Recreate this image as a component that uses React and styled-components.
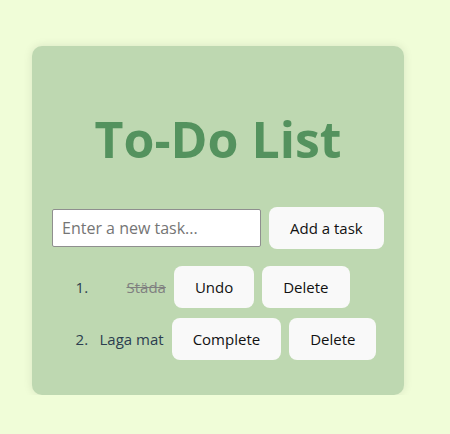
import React, { useState } from 'react';
import styled, { createGlobalStyle } from 'styled-components';

const GlobalStyle = createGlobalStyle`
  body {
    margin: 0;
    background: #f0fdd8;
    font-family: "Open Sans", "Noto Sans", sans-serif;
  }
`;

function App() {
  const [tasks, setTasks] = useState([
    { text: 'Städa', done: true },
    { text: 'Laga mat', done: false },
  ]);
  const [draft, setDraft] = useState('');

  const addTask = () => {
    if (!draft.trim()) return;
    setTasks([...tasks, { text: draft, done: false }]);
    setDraft('');
  };

  const toggle = (i) =>
    setTasks(tasks.map((t, j) => (j === i ? { ...t, done: !t.done } : t)));

  const remove = (i) => setTasks(tasks.filter((_, j) => j !== i));

  return (
    <>
      <GlobalStyle />
      <Page>
        <Card>
          <Title>To-Do List</Title>
          <InputRow>
            <TaskInput
              type="text"
              placeholder="Enter a new task..."
              value={draft}
              onChange={(e) => setDraft(e.target.value)}
            />
            <Button onClick={addTask}>Add a task</Button>
          </InputRow>
          <TaskList>
            {tasks.map((task, i) => (
              <TaskItem key={i}>
                <TaskText $done={task.done}>{task.text}</TaskText>
                <Button $inline onClick={() => toggle(i)}>
                  {task.done ? 'Undo' : 'Complete'}
                </Button>
                <Button $inline onClick={() => remove(i)}>Delete</Button>
              </TaskItem>
            ))}
          </TaskList>
        </Card>
      </Page>
    </>
  );
}

export default App;

const Page = styled.div`
  padding: 46px 0 0 32px;
`;

const Card = styled.div`
  box-sizing: border-box;
  width: 372px;
  height: 349px;
  padding: 20px;
  background: #bed8b1;
  border-radius: 10px;
  box-shadow: 0 0 10px rgba(0, 0, 0, 0.1);
`;

const Title = styled.h1`
  margin: 41px 0 0;
  font-size: 50px;
  line-height: 64px;
  font-weight: 700;
  color: #54925e;
  text-align: center;
`;

const InputRow = styled.div`
  display: flex;
  align-items: center;
  gap: 8px;
  margin-top: 36px;
`;

const TaskInput = styled.input`
  box-sizing: border-box;
  width: 209px;
  height: 38px;
  padding: 0 9px;
  border: 1px solid #8f8f8f;
  border-radius: 2px;
  font-family: inherit;
  font-size: 16px;
  color: #222;

  &::placeholder {
    color: #757575;
  }
`;

const Button = styled.button`
  box-sizing: border-box;
  height: 42px;
  padding: 0 21px;
  margin-left: ${(p) => (p.$inline ? '8px' : '0')};
  border: none;
  border-radius: 8px;
  background: #f9f9f9;
  font-family: inherit;
  font-size: 15px;
  color: #111;
  cursor: pointer;
`;

const TaskList = styled.ol`
  margin: 17px 0 0;
  padding-left: 40px;
  color: #2c3e50;
  font-size: 15px;
`;

const TaskItem = styled.li`
  text-align: center;
  margin-bottom: 10px;
  line-height: 42px;
`;

const TaskText = styled.span`
  color: ${(p) => (p.$done ? '#808080' : '#2c3e50')};
  text-decoration: ${(p) => (p.$done ? 'line-through' : 'none')};
`;
